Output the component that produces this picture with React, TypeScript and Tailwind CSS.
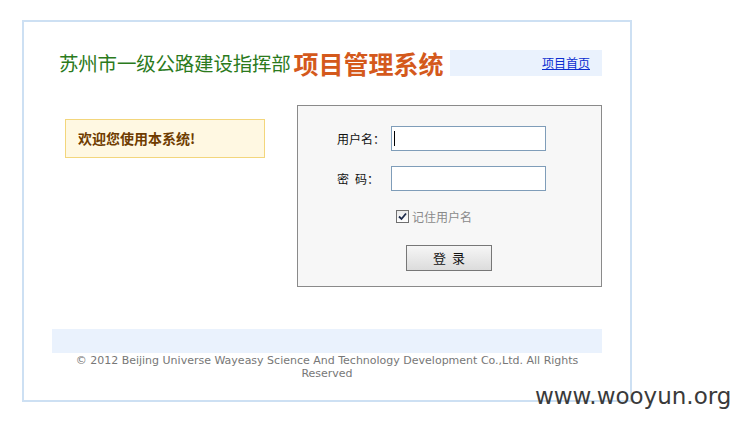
import React from "react";

const cjk = '"Noto Sans CJK SC", "DejaVu Sans", sans-serif';

function Header() {
  return (
    <div className="flex h-[26px] w-[550px]">
      <div className="flex w-[398px] items-center pl-[7px]">
        <span className="text-[19.5px] leading-none tracking-[-0.2px] text-[#2b7a1c]">
          苏州市一级公路建设指挥部
        </span>
        <span className="ml-[3px] text-[25px] font-bold leading-none text-[#d4591c]">
          项目管理系统
        </span>
      </div>
      <div className="flex flex-1 items-center justify-end bg-[#eaf2fd] pr-[12px]">
        <a href="#" className="text-[12px] leading-none text-[#0b2ed0] underline">
          项目首页
        </a>
      </div>
    </div>
  );
}

function LoginForm() {
  return (
    <div className="ml-auto h-[182px] w-[305px] border border-[#8a8a8a] bg-[#f7f7f7] pl-[39px] pt-[20px] text-[12px] text-[#111]">
      <div className="flex h-[25px] items-center">
        <span className="w-[54px]">用户名：</span>
        <div className="relative h-[25px] w-[155px] border border-[#7f9db9] bg-white">
          <input className="h-full w-full bg-transparent outline-none" />
          <span className="absolute left-[2px] top-[4px] h-[15px] w-px bg-black" />
        </div>
      </div>
      <div className="mt-[15px] flex h-[25px] items-center">
        <span className="w-[54px]">
          密<span className="ml-[6px]">码：</span>
        </span>
        <div className="h-[25px] w-[155px] border border-[#7f9db9] bg-white">
          <input type="password" className="h-full w-full bg-transparent outline-none" />
        </div>
      </div>
      <div className="ml-[59px] mt-[19px] flex h-[13px] items-center">
        <span className="flex h-[13px] w-[13px] items-center justify-center border border-[#707070] bg-gradient-to-b from-[#eaeaea] to-white">
          <svg width="9" height="9" viewBox="0 0 9 9">
            <path d="M1 4.5 L3.5 7 L8 1.5" fill="none" stroke="#1c2a4a" strokeWidth="1.8" />
          </svg>
        </span>
        <span className="ml-[3px] text-[#8a8a8a]">记住用户名</span>
      </div>
      <button className="ml-[69px] mt-[22px] flex h-[26px] w-[86px] items-center justify-center border border-[#777] bg-gradient-to-b from-[#f6f6f6] to-[#dcdcdc] text-[13px] text-[#111]">
        登<span className="ml-[6px]">录</span>
      </button>
    </div>
  );
}

export default function App() {
  return (
    <div className="relative min-h-screen bg-white pl-[22px] pt-[20px]" style={{ fontFamily: cjk }}>
      <div className="h-[382px] w-[610px] border-2 border-[#cde0f3] pl-[28px] pt-[28px]">
        <Header />
        <div className="mt-[29px] flex w-[550px]">
          <div className="ml-[13px] mt-[14px] flex h-[39px] w-[200px] items-center border border-[#f3d67c] bg-[#fff8e2] pl-[12px] text-[14px] font-bold text-[#6f3c00]">
            欢迎您使用本系统!
          </div>
          <LoginForm />
        </div>
        <div className="mt-[42px] w-[550px]">
          <div className="h-[24px] bg-[#eaf2fd]" />
          <p
            className="pt-[1px] text-center text-[11px] leading-[13px] text-[#777]"
            style={{ fontFamily: '"DejaVu Sans", sans-serif' }}
          >
            © 2012 Beijing Universe Wayeasy Science And Technology Development Co.,Ltd. All Rights
            <br />
            Reserved
          </p>
        </div>
      </div>
      <div
        className="absolute left-[535px] top-[385px] whitespace-nowrap text-[23px] leading-[23px] text-[#3a3a3a]"
        style={{ fontFamily: '"DejaVu Sans", sans-serif' }}
      >
        www.wooyun.org
      </div>
    </div>
  );
}
